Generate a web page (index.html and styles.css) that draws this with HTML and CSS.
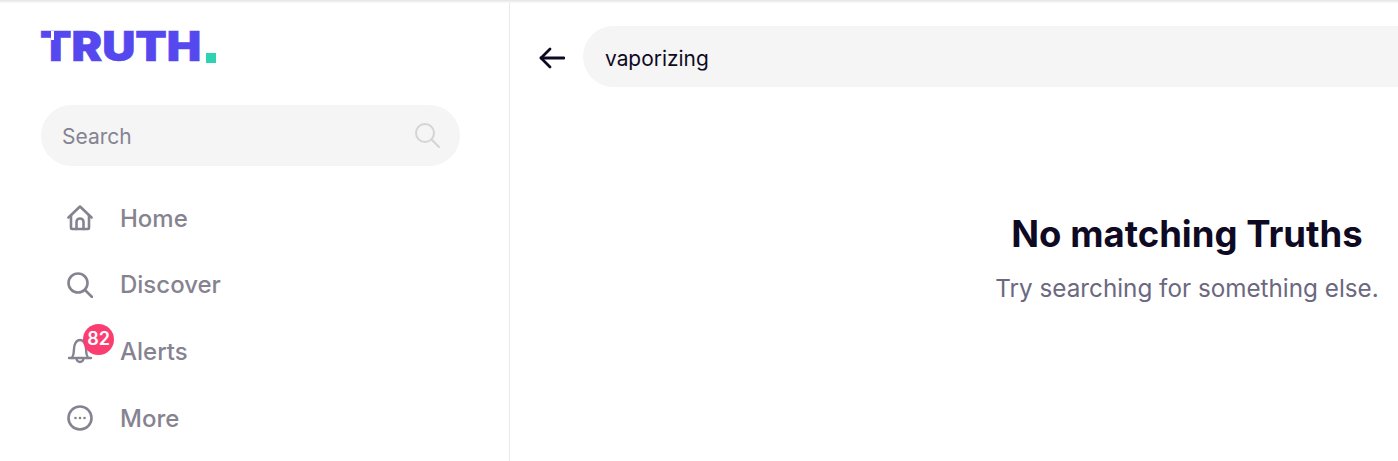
FILE: index.html
```html
<!DOCTYPE html>
<html lang="en">
<head>
    <meta charset="UTF-8">
    <meta name="viewport" content="width=device-width, initial-scale=1.0">
    <title>Truth Social</title>
    <link rel="stylesheet" href="styles.css">
</head>
<body class="page">
    <div class="top-shadow"></div>
    <!-- left column -->
    <aside class="sidebar">
        <div class="logo"><span class="logo-text">TRUTH</span><span class="logo-dot"></span><span class="logo-notch"></span></div>
        <div class="side-search">
            <span>Search</span>
            <svg class="side-search-icon" viewBox="0 0 26 26" fill="none" stroke="#d4d4d8" stroke-width="2" stroke-linecap="round">
                <circle cx="11" cy="11" r="9"></circle>
                <path d="M18 18l7 7"></path>
            </svg>
        </div>
        <nav class="nav">
            <a class="nav-item">
                <span class="nav-icon">
                    <svg viewBox="0 0 26 26" fill="none" stroke="#868391" stroke-width="2.6" stroke-linecap="round" stroke-linejoin="round">
                        <path d="M1.500 12.500L13 1.500l11.500 11"></path>
                        <path d="M4 10.500V23a1 1 0 0 0 1 1h16a1 1 0 0 0 1-1V10.500"></path>
                        <path d="M9.500 24v-7a3.500 3.500 0 0 1 7 0v7"></path>
                    </svg>
                </span>
                <span>Home</span>
            </a>
            <a class="nav-item">
                <span class="nav-icon">
                    <svg viewBox="0 0 26 26" fill="none" stroke="#868391" stroke-width="2.6" stroke-linecap="round">
                        <circle cx="11" cy="11" r="9.500"></circle>
                        <path d="M18 18l7 7"></path>
                    </svg>
                </span>
                <span>Discover</span>
            </a>
            <a class="nav-item">
                <span class="nav-icon">
                    <svg viewBox="0 0 26 26" fill="none" stroke="#868391" stroke-width="2.4" stroke-linecap="round" stroke-linejoin="round">
                        <path d="M2 20h22"></path>
                        <path d="M5 20c1.500-2.500 2-5.500 2-9 0-5 2.500-9 6-9s6 4 6 9c0 3.500.5 6.500 2 9"></path>
                        <path d="M9.500 20.500a3.500 3.500 0 0 0 7 0"></path>
                    </svg>
                    <span class="badge">82</span>
                </span>
                <span>Alerts</span>
            </a>
            <a class="nav-item">
                <span class="nav-icon">
                    <svg viewBox="0 0 26 26" fill="none" stroke="#868391" stroke-width="2.6" stroke-linecap="round">
                        <circle cx="13" cy="13" r="11.500"></circle>
                        <path d="M8.500 13h.01M13 13h.01M17.500 13h.01"></path>
                    </svg>
                </span>
                <span>More</span>
            </a>
        </nav>
    </aside>
    <!-- results column -->
    <main class="results">
        <div class="results-top">
            <svg class="back-icon" viewBox="0 0 26 22" fill="none" stroke="#0f0a24" stroke-width="2.800" stroke-linecap="round" stroke-linejoin="round">
                <path d="M25 11H2"></path>
                <path d="M11 2l-9 9 9 9"></path>
            </svg>
            <div class="query">vaporizing</div>
        </div>
        <div class="empty">
            <h1 class="empty-title">No matching Truths</h1>
            <p class="empty-text">Try searching for something else.</p>
        </div>
    </main>
</body>
</html>
```

FILE: styles.css
```css
* {
    box-sizing: border-box;
}
html, body {
    height: 100%;
}
.page {
    display: flex;
    margin: 0;
    overflow: hidden;
    font-family: "Inter", "Liberation Sans", sans-serif;
    background-color: white;
}
.top-shadow {
    position: absolute;
    top: 0;
    left: 0;
    right: 0;
    height: 3px;
    background: linear-gradient(#e4e4e6, #fbfbfb);
}
.sidebar {
    flex: 0 0 510px;
    height: 100%;
    padding: 27px 49px 0 41px;
    border-right: 1px solid #e9e9eb;
}
.logo {
    position: relative;
    display: flex;
    align-items: flex-end;
    height: 40px;
    color: #5448ee;
}
.logo-text {
    width: 165px;
    margin-left: -1px;
    font-size: 41px;
    font-weight: 900;
    line-height: 41px;
    white-space: nowrap;
    -webkit-text-stroke: 0.6px #5448ee;
    transform: scaleX(1.12);
    transform-origin: left center;
}
.logo-notch {
    position: absolute;
    left: 10px;
    top: 4px;
    width: 2.500px;
    height: 9px;
    background-color: white;
}
.logo-dot {
    width: 9.500px;
    height: 10px;
    margin: 0 0 4px 1px;
    background-color: #2fd3b1;
}
.side-search {
    display: flex;
    justify-content: space-between;
    align-items: center;
    height: 61px;
    margin-top: 38px;
    padding: 0 20px 2px 21px;
    border-radius: 31px;
    background-color: #f5f5f5;
    font-size: 21px;
    line-height: 28px;
    color: #868391;
}
.side-search span {
    padding-top: 5px;
}
.side-search-icon {
    width: 26px;
    height: 26px;
}
.nav {
    display: flex;
    flex-direction: column;
    margin-top: 19px;
}
.nav-item {
    display: flex;
    align-items: center;
    gap: 27px;
    height: 66.600px;
    padding-left: 26px;
    font-size: 24px;
    font-weight: 500;
    color: #868391;
}
.nav-icon {
    position: relative;
    display: block;
    width: 26px;
    height: 26px;
}
.nav-icon svg {
    display: block;
    width: 26px;
    height: 26px;
}
.badge {
    position: absolute;
    top: -14px;
    left: 16px;
    width: 31px;
    height: 31px;
    border-radius: 50%;
    background-color: #fb3d71;
    color: white;
    font-size: 18px;
    font-weight: 600;
    line-height: 30px;
    text-align: center;
}
.results {
    flex: 1;
    min-width: 0;
}
.results-top {
    display: flex;
    align-items: center;
    gap: 18px;
    margin-top: 26px;
    padding-left: 29px;
}
.back-icon {
    width: 26px;
    height: 22px;
    margin-top: 2px;
}
.query {
    flex: 1;
    height: 61px;
    padding: 2px 0 0 22px;
    border-radius: 31px 0 0 31px;
    background-color: #f5f5f5;
    font-size: 20.900px;
    line-height: 61px;
    color: #0f0a24;
}
.empty {
    margin-top: 125px;
    padding-left: 466px;
    text-align: center;
}
.empty-title {
    margin: 0;
    font-size: 36.500px;
    font-weight: 700;
    line-height: 44px;
    white-space: nowrap;
    color: #0f0a24;
}
.empty-text {
    margin: 17px 0 0;
    font-size: 24.250px;
    line-height: 32px;
    white-space: nowrap;
    color: #6b6880;
}
```
